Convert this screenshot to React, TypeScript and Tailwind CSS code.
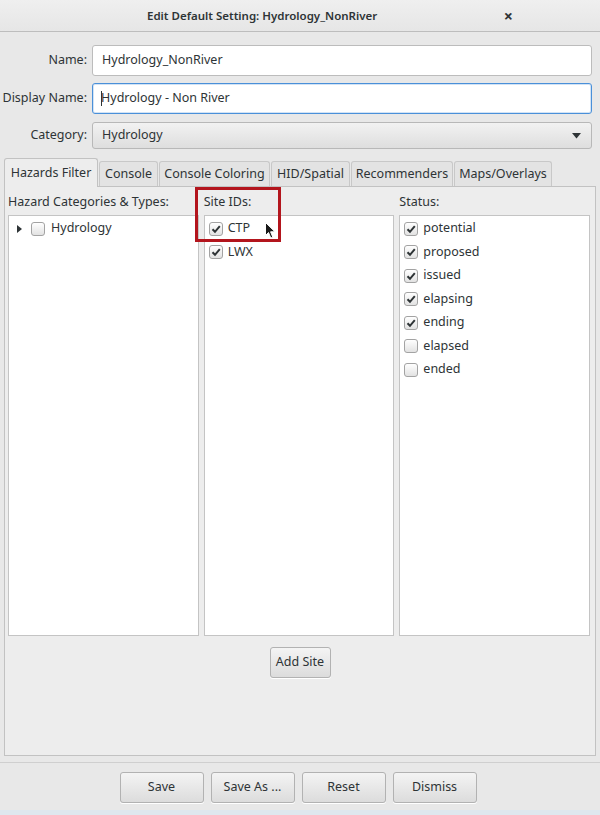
import React from 'react';

const FONT = { fontFamily: '"Noto Sans", "Open Sans", sans-serif' };

const tabs: [string, string][] = [
    ['Hazards Filter', 'w-[94px]'],
    ['Console', 'w-[59px]'],
    ['Console Coloring', 'w-[111px]'],
    ['HID/Spatial', 'w-[79px]'],
    ['Recommenders', 'w-[102px]'],
    ['Maps/Overlays', 'w-[98px]'],
];

const statuses: [string, boolean][] = [
    ['potential', true],
    ['proposed', true],
    ['issued', true],
    ['elapsing', true],
    ['ending', true],
    ['elapsed', false],
    ['ended', false],
];

function CheckBox({ checked }: { checked: boolean }) {
    return (
        <span className="flex h-[14px] w-[14px] shrink-0 items-center justify-center rounded-[3px] border border-[#a3a3a3] bg-gradient-to-b from-[#ffffff] to-[#e2e2e2]">
            {checked && (
                <svg width="10" height="10" viewBox="0 0 10 10">
                    <path d="M1.5 5.2 L4 7.8 L8.8 2.2" fill="none" stroke="#2e3436" strokeWidth="2" />
                </svg>
            )}
        </span>
    );
}

function CheckRow({ label, checked }: { label: string; checked: boolean }) {
    return (
        <div className="flex h-[23.5px] items-center gap-[5px] pl-[4px] text-[#2e3436]">
            <CheckBox checked={checked} />
            <span>{label}</span>
        </div>
    );
}

function Button({ label, className }: { label: string; className?: string }) {
    return (
        <button
            className={`flex h-[31px] items-center justify-center rounded-[3px] border border-[#b2b2b2] bg-gradient-to-b from-[#f4f4f4] to-[#dcdcdc] text-[12.5px] text-[#2e3436] shadow-[0_1px_0_#ffffff] ${className ?? ''}`}
        >
            {label}
        </button>
    );
}

export default function App() {
    return (
        <div className="relative flex h-[815px] w-[600px] flex-col overflow-hidden bg-[#e8e8e8] text-[12.5px] whitespace-nowrap" style={FONT}>
            {/* Title bar (window is wider than the shot, so title sits left of centre) */}
            <div className="flex h-[32px] shrink-0 items-center border-b border-[#bdbdbd] bg-gradient-to-b from-[#efefef] to-[#e6e6e6] pl-[147px] pr-[87px] text-[#2e3436]">
                <div className="text-[11.5px] font-semibold">Edit Default Setting: Hydrology_NonRiver</div>
                <div className="flex-1" />
                <div className="text-[16px] font-bold">×</div>
            </div>

            {/* Form fields */}
            <div className="mt-[13px] grid grid-cols-[92px_1fr] items-center gap-y-[7px] pr-[8px] text-[#2e3436]">
                <div className="pr-[5px] text-right">Name:</div>
                <div className="flex h-[31px] items-center rounded-[3px] border border-[#bcbcbc] bg-white pl-[9px]">Hydrology_NonRiver</div>
                <div className="pr-[5px] text-right">Display Name:</div>
                <div className="flex h-[31px] items-center rounded-[3px] border border-[#4a90d9] bg-white pl-[8px] shadow-[inset_0_0_0_1px_rgba(74,144,217,0.25)]">
                    <span className="mr-[-1px] h-[15px] w-[1px] bg-[#2e3436]" />
                    Hydrology - Non River
                </div>
                <div className="pr-[5px] text-right">Category:</div>
                <div className="mt-[1px] flex h-[27px] items-center justify-between rounded-[3px] border border-[#b8b8b8] bg-gradient-to-b from-[#f2f2f2] to-[#dedede] pl-[9px] pr-[10px]">
                    <span>Hydrology</span>
                    <svg width="9" height="6" viewBox="0 0 9 6">
                        <path d="M0 0 H9 L4.5 5.5 Z" fill="#2e3436" />
                    </svg>
                </div>
            </div>

            {/* Tabs */}
            <div className="mt-[9px] flex items-end px-[4px] text-[#2e3436]">
                {tabs.map(([tab, width], i) =>
                    i === 0 ? (
                        <div
                            key={tab}
                            className={`relative z-10 mb-[-1px] flex h-[29px] items-center justify-center rounded-t-[3px] border border-b-0 border-[#c2c2c2] bg-[#ededed] ${width}`}
                        >
                            {tab}
                        </div>
                    ) : (
                        <div
                            key={tab}
                            className={`ml-[1px] flex h-[25px] items-center justify-center rounded-t-[3px] border border-b-0 border-[#c8c8c8] bg-[#e3e3e3] ${width}`}
                        >
                            {tab}
                        </div>
                    )
                )}
            </div>

            {/* Panel */}
            <div className="mx-[4px] flex h-[570px] flex-col border border-[#c2c2c2] bg-[#ededed] pl-[3px] pr-[5px]">
                <div className="grid grid-cols-3 gap-x-[5px] text-[#2e3436]">
                    <div className="flex flex-col">
                        <div className="flex h-[28px] items-center pt-[2px]">Hazard Categories &amp; Types:</div>
                        <div className="h-[421px] border border-[#c4c4c4] bg-white">
                            <div className="flex h-[25px] items-center pl-[8px]">
                                <svg width="6" height="8" viewBox="0 0 6 8" className="mr-[8px]">
                                    <path d="M0 0 L5 4 L0 8 Z" fill="#2e3436" />
                                </svg>
                                <CheckBox checked={false} />
                                <span className="ml-[6px]">Hydrology</span>
                            </div>
                        </div>
                    </div>
                    <div className="flex flex-col">
                        <div className="flex h-[28px] items-center pt-[2px]">Site IDs:</div>
                        <div className="h-[421px] border border-[#c4c4c4] bg-white pt-[1px]">
                            <CheckRow label="CTP" checked />
                            <CheckRow label="LWX" checked />
                        </div>
                    </div>
                    <div className="flex flex-col">
                        <div className="flex h-[28px] items-center pt-[2px]">Status:</div>
                        <div className="h-[421px] border border-[#c4c4c4] bg-white pt-[1px]">
                            {statuses.map(([label, checked]) => (
                                <CheckRow key={label} label={label} checked={checked} />
                            ))}
                        </div>
                    </div>
                </div>
                <div className="flex justify-center pt-[11px] pl-[2px]">
                    <Button label="Add Site" className="w-[61px]" />
                </div>
            </div>

            {/* Bottom bar */}
            <div className="mt-[6px] border-t border-[#cfcfcf]" />
            <div className="mt-[9px] flex justify-center gap-[7px] pr-[4px]">
                <Button label="Save" className="w-[84px]" />
                <Button label="Save As ..." className="w-[84px]" />
                <Button label="Reset" className="w-[84px]" />
                <Button label="Dismiss" className="w-[84px]" />
            </div>
            <div className="mt-auto h-[5px] bg-[#dfe7ee]" />

            {/* Highlight box annotation */}
            <div className="absolute left-[195px] top-[187px] h-[55px] w-[86px] border-[3px] border-[#b3151d]" />

            {/* Mouse pointer */}
            <svg className="absolute left-[265px] top-[222px]" width="11" height="17" viewBox="0 0 11 17">
                <path d="M0.5 0.5 L0.5 13.5 L3.5 10.5 L5.8 16 L7.8 15.2 L5.6 9.8 L10 9.8 Z" fill="#1a1a1a" stroke="#ffffff" strokeWidth="1" />
            </svg>
        </div>
    );
}
